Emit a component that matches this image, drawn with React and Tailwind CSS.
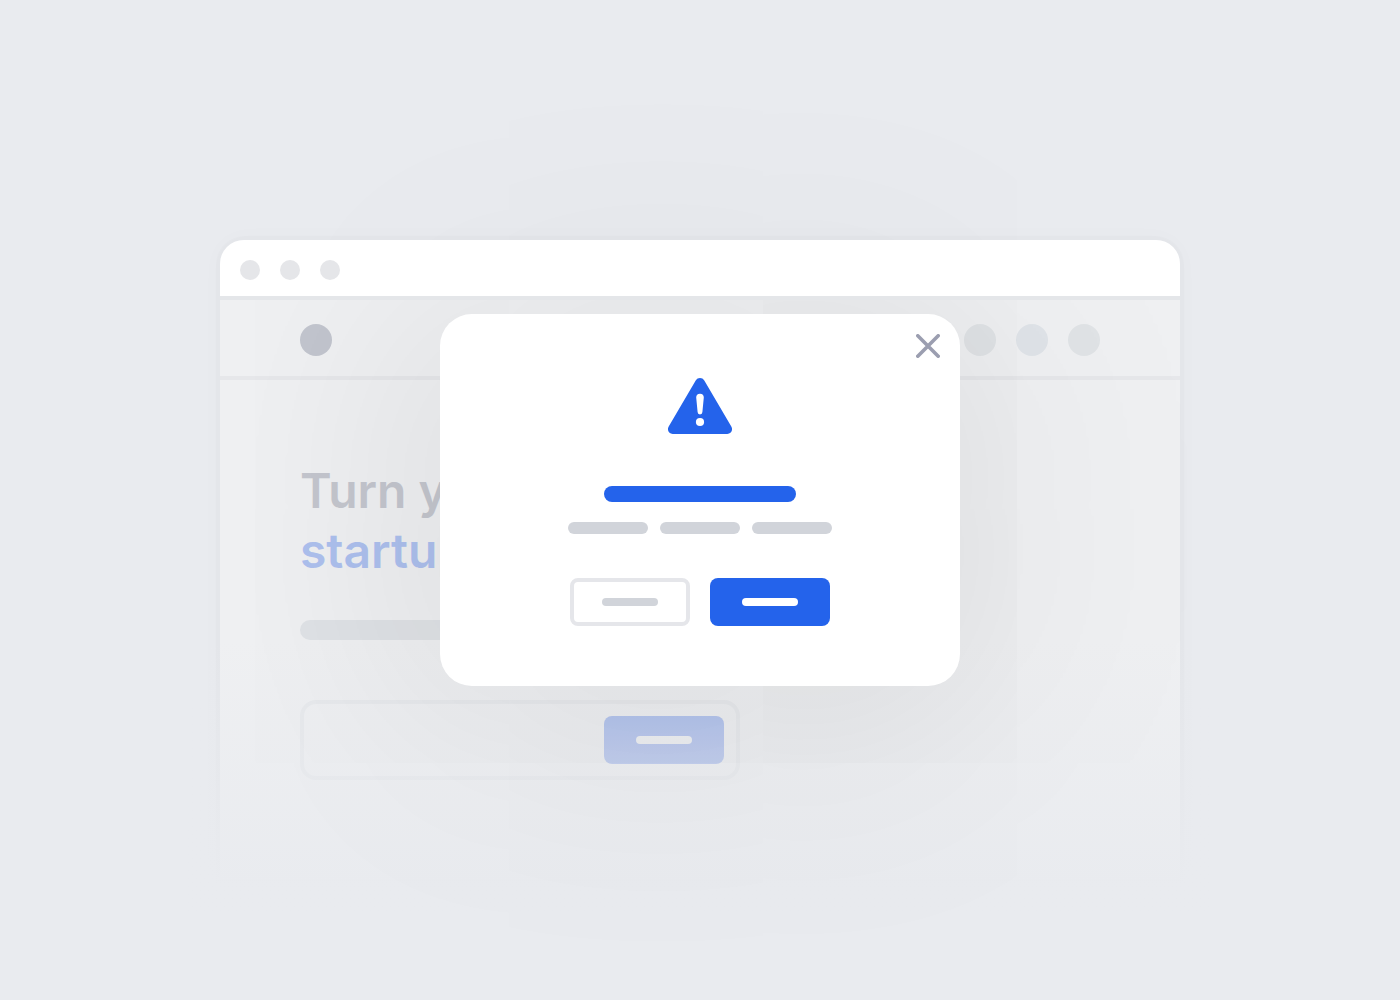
function Dot({ className }) {
  return <span className={`block shrink-0 rounded-full ${className}`} />;
}

function BrowserWindow() {
  return (
    <section className="relative col-start-1 row-start-1 mt-60 w-full max-w-[960px] self-start rounded-t-3xl shadow-[0_0_0_4px_rgba(0,0,0,0.012),0_0_24px_rgba(0,0,0,0.025)]">
      <div className="relative z-20 flex gap-5 rounded-t-3xl border-b-4 border-[#e4e6e9] bg-white px-5 pt-5 pb-4">
        <Dot className="size-5 bg-[#e5e6e9]" />
        <Dot className="size-5 bg-[#e5e6e9]" />
        <Dot className="size-5 bg-[#e5e6e9]" />
      </div>
      <div className="bg-[#eff0f2]">
        <header className="flex items-center justify-between border-b-4 border-[#e6e7ea] px-20 pt-6 pb-5">
          <Dot className="size-8 bg-[#c2c5ce]" />
          <nav aria-label="Site" className="flex gap-5">
            <Dot className="size-8 bg-[#e0e3e6]" />
            <Dot className="size-8 bg-[#dfe3e8]" />
            <Dot className="size-8 bg-[#e0e3e6]" />
          </nav>
        </header>
        <div className="px-20 pt-[81px] pb-[100px]">
          <h1 className="text-5xl leading-[60px] font-semibold text-[#c4c6ce]">
            Turn your
            <br />
            <span className="text-[#adc0ee]">startup</span>
          </h1>
          <div className="mt-[39px] h-5 max-w-[400px] rounded-full bg-[#dfe2e6]" />
          <form
            onSubmit={(e) => e.preventDefault()}
            className="mt-[60px] flex max-w-[440px] rounded-2xl border-4 border-[#e6e8eb] p-3"
          >
            <input aria-label="Email" className="min-w-0 flex-1 bg-transparent px-2 text-base outline-none" />
            <button aria-label="Submit" className="flex h-12 w-[120px] items-center justify-center rounded-lg bg-[#9db3ec]">
              <span className="h-2 w-14 rounded-full bg-[#f0f2f4]" />
            </button>
          </form>
        </div>
      </div>
      <div className="pointer-events-none absolute -inset-x-8 -bottom-8 h-[272px] bg-linear-to-b from-[#e9ebef]/0 to-[#e9ebef] to-92%" />
    </section>
  );
}

function AlertDialog() {
  return (
    <div
      role="alertdialog"
      aria-label="Warning"
      className="relative z-10 col-start-1 row-start-1 flex w-full max-w-[520px] flex-col items-center self-center rounded-4xl bg-white px-5 pt-5 pb-[60px] shadow-[0_20px_280px_20px_rgba(20,20,0,0.1)]"
    >
      <button aria-label="Close" className="self-end">
        <svg viewBox="0 0 24 24" className="size-6" fill="none" stroke="#9b9eb0" strokeWidth="3.6" strokeLinecap="round">
          <path d="M1.8 1.8 22.2 22.2M22.2 1.8 1.8 22.2" />
        </svg>
      </button>
      <svg viewBox="0 0 64 56" className="mt-5 h-14 w-16" aria-hidden="true">
        <path
          fill="#2463eb"
          d="M27.7 2.5C29.6-.8 34.4-.8 36.3 2.5L63.3 48.5C65.3 52 63.2 56 59.3 56H4.7C.8 56-1.3 52 .7 48.5Z"
        />
        <path fill="#fff" d="M28.2 19.5a3.8 3.8 0 0 1 7.6 0L34.4 34a2.4 2.4 0 0 1-4.8 0Z" />
        <circle cx="32" cy="44" r="4.1" fill="#fff" />
      </svg>
      <div className="mt-[52px] h-4 w-48 rounded-full bg-[#2463eb]" />
      <div className="mt-5 flex gap-3">
        <span className="h-3 w-20 rounded-full bg-[#d1d4da]" />
        <span className="h-3 w-20 rounded-full bg-[#d1d4da]" />
        <span className="h-3 w-20 rounded-full bg-[#d1d4da]" />
      </div>
      <div className="mt-11 flex gap-5">
        <button aria-label="Cancel" className="flex h-12 w-[120px] items-center justify-center rounded-lg border-4 border-[#e5e6ea]">
          <span className="h-2 w-14 rounded-full bg-[#d1d4da]" />
        </button>
        <button aria-label="Confirm" className="flex h-12 w-[120px] items-center justify-center rounded-lg bg-[#2463eb]">
          <span className="h-2 w-14 rounded-full bg-white" />
        </button>
      </div>
    </div>
  );
}

export default function App() {
  return (
    <main className="grid min-h-screen grid-cols-1 justify-items-center overflow-hidden bg-[#e9ebef] font-['Inter',sans-serif]">
      <BrowserWindow />
      <AlertDialog />
    </main>
  );
}
